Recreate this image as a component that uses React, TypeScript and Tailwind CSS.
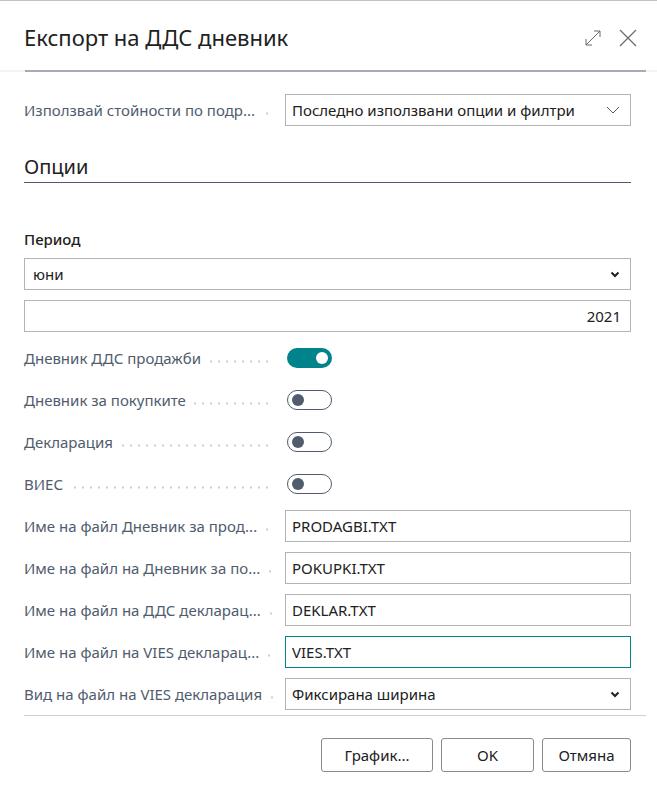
import React from "react";

const font = "font-['Segoe_UI','Noto_Sans','Open_Sans',sans-serif]";

const Leader = () => (
  <span className="ml-2 mr-[14px] mt-[6px] h-[3px] min-w-[6px] flex-1 bg-[radial-gradient(circle,#c9ccd1_0.9px,transparent_1.3px)] bg-[length:8px_3px] bg-right bg-repeat-x" />
);

const Label = ({ text }: { text: string }) => (
  <div className="flex w-[261px] shrink-0 items-center">
    <span className="whitespace-nowrap text-[15px] text-[#505c6d]">{text}</span>
    <Leader />
  </div>
);

const Chevron = ({ thin }: { thin?: boolean }) =>
  thin ? (
    <svg width="14" height="8" viewBox="0 0 14 8" fill="none">
      <path d="M1 1l6 6 6-6" stroke="#505c6d" strokeWidth="1" />
    </svg>
  ) : (
    <svg width="10" height="7" viewBox="0 0 10 7" fill="none">
      <path d="M1.5 1.5l3.5 3.5 3.5-3.5" stroke="#212121" strokeWidth="2" />
    </svg>
  );

const Toggle = ({ on }: { on?: boolean }) =>
  on ? (
    <div className="ml-[2px] flex h-5 w-[45px] items-center justify-end rounded-full bg-[#00838a] pr-[4px]">
      <div className="h-3 w-3 rounded-full bg-white" />
    </div>
  ) : (
    <div className="ml-[2px] flex h-5 w-[45px] items-center rounded-full border border-[#505c6d] bg-white pl-[4px]">
      <div className="h-3 w-3 rounded-full bg-[#505c6d]" />
    </div>
  );

const toggles = [
  { label: "Дневник ДДС продажби", on: true },
  { label: "Дневник за покупките" },
  { label: "Декларация" },
  { label: "ВИЕС" },
];

const files = [
  { label: "Име на файл Дневник за прод...", value: "PRODAGBI.TXT" },
  { label: "Име на файл на Дневник за по...", value: "POKUPKI.TXT" },
  { label: "Име на файл на ДДС декларац...", value: "DEKLAR.TXT" },
  { label: "Име на файл на VIES декларац...", value: "VIES.TXT", focus: true },
];

const App = () => {
  return (
    <div className={`${font} flex h-[785px] w-[657px] flex-col border-t border-[#c2c2c2] bg-white text-[#212121]`}>
      <div className="flex h-[69px] shrink-0 items-center justify-between pl-6 pr-[19px] pt-[4px]">
        <h1 className="text-[22px] font-normal">Експорт на ДДС дневник</h1>
        <div className="flex items-center gap-[15px]">
          <svg width="20" height="20" viewBox="0 0 20 20" fill="none" stroke="#6b6b6b" strokeWidth="1">
            <path d="M3 17L17 3M11 3h6v6M3 11v6h6" />
          </svg>
          <svg width="20" height="20" viewBox="0 0 20 20" fill="none" stroke="#6b6b6b" strokeWidth="1.2">
            <path d="M2 2l16 16M18 2L2 18" />
          </svg>
        </div>
      </div>

      <div className="h-[2px] shrink-0 bg-[#f3f3f3]">
        <div className="ml-[25px] mr-[11px] h-full bg-[#a7abb4]" />
      </div>

      <div className="pl-6 pr-[26px]">
        <div className="mt-[22px] flex h-8 items-center">
          <Label text="Използвай стойности по подр..." />
          <div className="flex h-8 flex-1 items-center justify-between border border-[#b3b3b3] pl-[6px] pr-[10px] text-[15px]">
            <span>Последно използвани опции и филтри</span>
            <Chevron thin />
          </div>
        </div>

        <div className="mt-[28px] border-b border-[#505c6d] pb-[2px]">
          <h2 className="text-[20px] leading-[26px]">Опции</h2>
        </div>

        <div className="mt-[46px] text-[15px] font-medium leading-5">Период</div>

        <div className="mt-[9px] flex h-8 items-center justify-between border border-[#b3b3b3] pl-2 pr-[10px] text-[15px]">
          <span>юни</span>
          <Chevron />
        </div>
        <div className="mt-[10px] flex h-8 items-center justify-end border border-[#b3b3b3] pr-[9px] text-[15px]">
          2021
        </div>

        <div className="mt-[5px]">
          {toggles.map((t) => (
            <div key={t.label} className="flex h-[42px] items-center">
              <Label text={t.label} />
              <Toggle on={t.on} />
            </div>
          ))}
          {files.map((f) => (
            <div key={f.label} className="flex h-[42px] items-center">
              <Label text={f.label} />
              <div
                className={`flex h-8 flex-1 items-center border pl-[6px] text-[15px] ${
                  f.focus ? "border-[#00838a]" : "border-[#b3b3b3]"
                }`}
              >
                {f.value}
              </div>
            </div>
          ))}
          <div className="flex h-[42px] items-center">
            <Label text="Вид на файл на VIES декларация" />
            <div className="flex h-8 flex-1 items-center justify-between border border-[#b3b3b3] pl-[6px] pr-[10px] text-[15px]">
              <span>Фиксирана ширина</span>
              <Chevron />
            </div>
          </div>
        </div>
      </div>

      <div className="ml-6 mr-[11px] border-t border-[#d0d0d0]" />

      <div className="mt-[22px] flex justify-end gap-2 pr-[26px] text-[15px]">
        <button className="h-[34px] w-[112px] rounded-[3px] border border-[#8a8a8a] bg-white">График...</button>
        <button className="h-[34px] w-[93px] rounded-[3px] border border-[#8a8a8a] bg-white">OK</button>
        <button className="h-[34px] w-[89px] rounded-[3px] border border-[#8a8a8a] bg-white">Отмяна</button>
      </div>
    </div>
  );
};

export default App;
